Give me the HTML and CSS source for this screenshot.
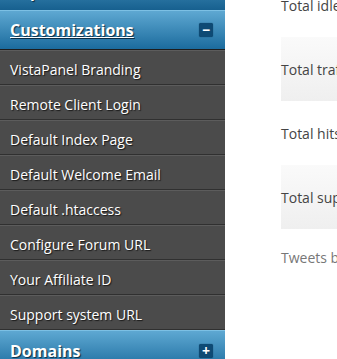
FILE: index.html
```html
<!DOCTYPE html>
<html lang="en">
<head>
    <meta charset="UTF-8">
    <title>Control Panel</title>
    <link rel="stylesheet" href="styles.css">
</head>
<body>

<div class="page">
    <aside class="sidebar">
        <div class="menu-head prev">
            <span class="menu-title">Reports</span>
        </div>

        <div class="menu-head open">
            <a class="menu-title" href="#">Customizations</a>
            <span class="toggle">&minus;</span>
        </div>
        <ul class="menu-list">
            <li><a href="#">VistaPanel Branding</a></li>
            <li><a href="#">Remote Client Login</a></li>
            <li><a href="#">Default Index Page</a></li>
            <li><a href="#">Default Welcome Email</a></li>
            <li><a href="#">Default .htaccess</a></li>
            <li><a href="#">Configure Forum URL</a></li>
            <li><a href="#">Your Affiliate ID</a></li>
            <li><a href="#">Support system URL</a></li>
        </ul>

        <div class="menu-head">
            <span class="menu-title">Domains</span>
            <span class="toggle">+</span>
        </div>
    </aside>

    <main class="content">
        <table class="stats">
            <tr><td>Total idle accounts</td></tr>
            <tr class="alt"><td>Total traffic used</td></tr>
            <tr><td>Total hits this month</td></tr>
            <tr class="alt"><td>Total support tickets</td></tr>
        </table>
        <p class="tweets">Tweets by reseller</p>
    </main>
</div>

</body>
</html>
```

FILE: styles.css
```css
body {
    margin: 0;
    padding: 0;
    font-family: "Open Sans", Arial, sans-serif;
    background-color: #fff;
    overflow: hidden;
}
.page {
    display: flex;
    height: 359px;
    overflow: hidden;
}
.sidebar {
    width: 225px;
    flex-shrink: 0;
    background-color: #4b4b4b;
    margin-top: -30px;
}
.menu-head {
    height: 39px;
    display: flex;
    align-items: center;
    justify-content: space-between;
    padding: 0 12px 0 10px;
    border-top: 1px solid #7cc0e4;
    background: linear-gradient(to bottom, #5ea8d2, #1b6b9d);
}
.menu-head.open {
    border-bottom: 1px solid #1d1d1d;
    height: 38px;
}
.menu-head.prev {
    border-top: none;
    height: 39px;
    padding-top: 1px;
    background: linear-gradient(to bottom, #4f9dc9, #17608f);
}
.menu-title {
    color: #fff;
    font-size: 16px;
    font-weight: bold;
    text-decoration: none;
    text-shadow: 1px 1px 1px #0a2d45;
}
.menu-head.open .menu-title {
    text-decoration: underline;
}
.toggle {
    width: 14px;
    height: 14px;
    background-color: #0e4a74;
    border-radius: 2px;
    color: #fff;
    font-size: 14px;
    font-weight: bold;
    line-height: 13px;
    text-align: center;
    box-shadow: 0 0 1px #0a3658;
}
.menu-list {
    list-style: none;
    margin: 0;
    padding: 0;
}
.menu-list li {
    height: 30px;
    padding: 3px 0 0 10px;
    border-top: 1px solid #5c5c5c;
    border-bottom: 1px solid #303030;
    display: flex;
    align-items: center;
}
.menu-list a {
    color: #fff;
    font-size: 14px;
    text-decoration: none;
    text-shadow: 1px 1px 1px #1a1a1a;
}
.content {
    flex: 1;
    padding-left: 56px;
    min-width: 0;
    overflow: hidden;
}
.stats {
    border-collapse: collapse;
    margin-top: -27px;
    width: 400px;
}
.stats td {
    height: 64px;
    padding: 0;
    font-size: 14px;
    color: #444;
    white-space: nowrap;
    vertical-align: middle;
}
.stats tr.alt td {
    background: linear-gradient(to bottom, #fafafa, #efefef);
}
.tweets {
    margin: 19px 0 0;
    font-size: 14px;
    color: #777;
    white-space: nowrap;
}
```
